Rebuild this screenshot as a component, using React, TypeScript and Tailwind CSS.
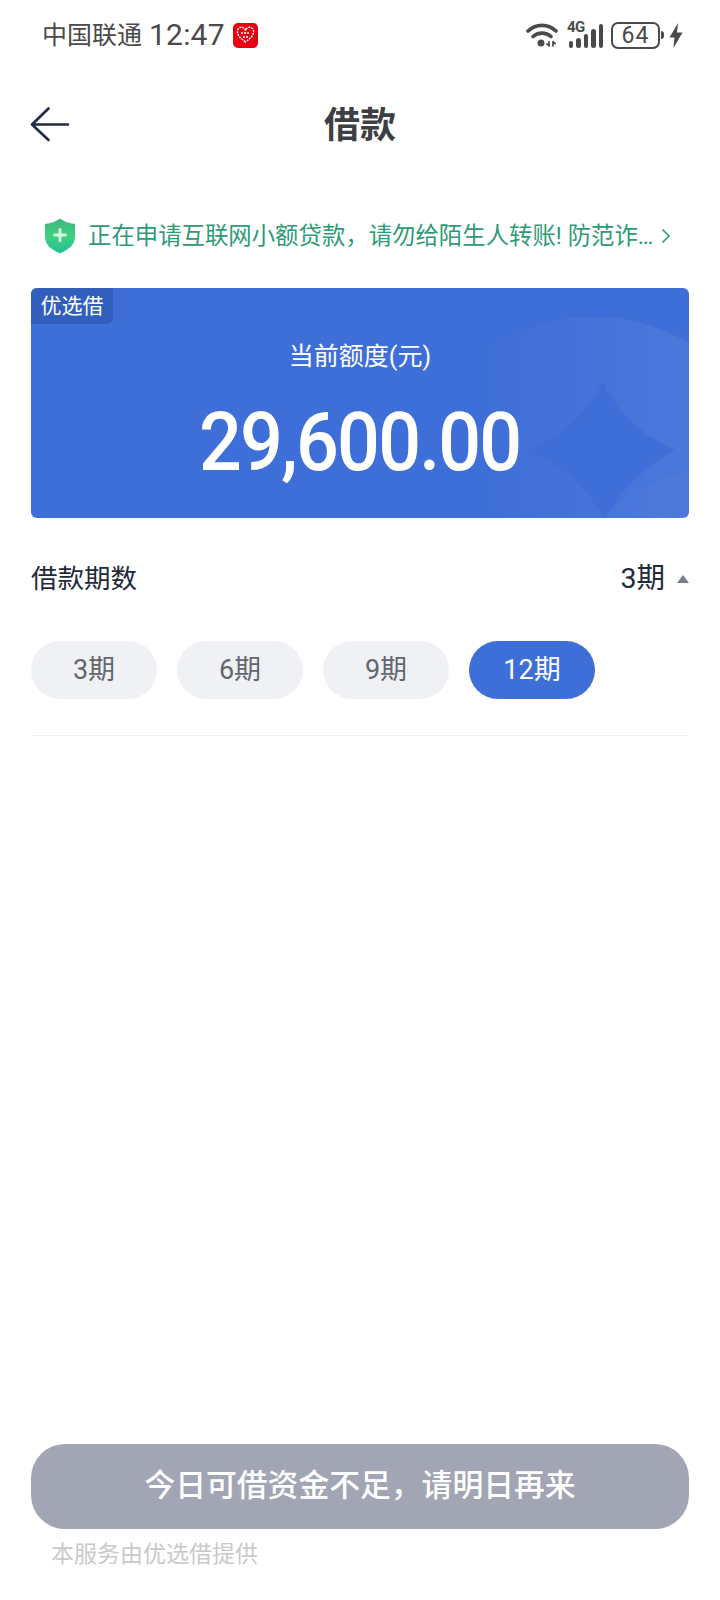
import { ChevronRight } from 'lucide-react';

const font = { cjk: 'font-["Roboto","Noto_Sans_CJK_SC",sans-serif]' };

function WifiIcon() {
  return (
    <svg width="33" height="26" viewBox="0 0 33 26" fill="none" stroke="#4a4a4a" strokeWidth="3.6" strokeLinecap="round">
      <path d="M2 9C10 1.5 22 1.5 30 9" />
      <path d="M7 14.5C12 10 20 10 25 14.5" />
      <circle cx="15" cy="21" r="3.5" fill="#4a4a4a" stroke="none" />
      <path d="M23 19.5v4.5M23 24l-2.2-2.2M27 19.5v4.5M27 19.5l2.2 2.2" strokeWidth="1.7" />
    </svg>
  );
}

function SignalIcon() {
  return (
    <div className="relative w-[36px] h-[26px] flex items-end justify-end gap-[3px]">
      <span className="absolute left-0 top-[-3px] text-[15px] leading-[16px] font-bold tracking-[-0.5px] text-[#4a4a4a]">4G</span>
      <div className="w-[4.5px] h-[7px] rounded-full bg-[#4a4a4a]" />
      <div className="w-[4.5px] h-[10px] rounded-full bg-[#4a4a4a]" />
      <div className="w-[4.5px] h-[14px] rounded-full bg-[#4a4a4a]" />
      <div className="w-[4.5px] h-[19px] rounded-full bg-[#4a4a4a]" />
      <div className="w-[4.5px] h-[24px] rounded-full bg-[#4a4a4a]" />
    </div>
  );
}

function HealthBadge() {
  return (
    <div className="w-[25px] h-[25px] rounded-[5px] bg-[#e60012] flex items-center justify-center">
      <svg width="19" height="18" viewBox="0 0 19 18" fill="none" stroke="#fff" strokeWidth="1.4" strokeDasharray="2 1">
        <path d="M9.5 16C5 12.5 1.5 10 1.5 6A4 4 0 0 1 9.5 4.5 4 4 0 0 1 17.5 6C17.5 10 14 12.5 9.5 16Z" />
        <path d="M5 7h9M7 11h5" />
      </svg>
    </div>
  );
}

function ShieldIcon() {
  return (
    <svg width="32" height="36" viewBox="0 0 32 36">
      <defs>
        <linearGradient id="shield" x1="0" y1="0" x2="0" y2="1">
          <stop offset="0" stopColor="#3fb37f" />
          <stop offset="0.5" stopColor="#3ed27c" />
          <stop offset="1" stopColor="#22c09a" />
        </linearGradient>
      </defs>
      <path d="M16 0.5C20 3.5 25 5.5 31 6V19C31 27 24 32 16 35.5 8 32 1 27 1 19V6C7 5.5 12 3.5 16 0.5Z" fill="url(#shield)" />
      <path d="M16 11.5v11M10.5 17h11" stroke="#d9f7e6" strokeWidth="3" strokeLinecap="round" />
    </svg>
  );
}

export default function App() {
  return (
    <div className={`w-[720px] h-[1600px] bg-white flex flex-col overflow-hidden ${font.cjk}`}>
      {/* Status bar */}
      <div className="h-[70px] pl-[42px] pr-[37px] flex items-center justify-between text-[#4a4a4a]">
        <div className="flex items-center">
          <span className="text-[25px] leading-none">中国联通</span>
          <span className="ml-[7px] text-[30px] leading-none tracking-[0.2px]">12:47</span>
          <div className="ml-[8px]"><HealthBadge /></div>
        </div>
        <div className="flex items-center">
          <WifiIcon />
          <div className="ml-[8px]"><SignalIcon /></div>
          <div className="ml-[8px] w-[49px] h-[27px] rounded-[7px] border-[2.5px] border-[#4a4a4a] flex items-center justify-center text-[23px] leading-none tracking-[1px]">64</div>
          <div className="ml-[1px] w-[3px] h-[8px] rounded-r-sm bg-[#4a4a4a]" />
          <svg className="ml-[5px]" width="14" height="25" viewBox="0 0 14 25" fill="#4a4a4a">
            <path d="M9 0L0.5 14.5H5.5L4.5 25 13.5 9.5H8Z" />
          </svg>
        </div>
      </div>

      {/* Title bar */}
      <div className="relative h-[112px] flex items-center justify-center">
        <svg className="absolute left-[30px] top-[36px]" width="40" height="36" viewBox="0 0 40 36" fill="none" stroke="#1f2a44" strokeWidth="2.6" strokeLinecap="round" strokeLinejoin="round">
          <path d="M38 18.5H2M18.5 2.5L2 18.5L18.5 34" />
        </svg>
        <h1 className="text-[36px] leading-none font-bold text-[#3d3f44]">借款</h1>
      </div>

      {/* Notice */}
      <div className="mt-[34px] pl-[44px] pr-[42px] h-[40px] flex items-center text-[#2f9a76]">
        <ShieldIcon />
        <p className="ml-[12px] pt-[2px] flex-1 min-w-0 whitespace-nowrap text-[23.4px] leading-none">正在申请互联网小额贷款，请勿给陌生人转账! 防范诈…</p>
        <ChevronRight className="w-[24px] h-[28px] shrink-0" strokeWidth={1.7} />
      </div>

      {/* Limit card */}
      <div className="relative mt-[32px] mx-[31px] h-[230px] rounded-[6px] bg-[#3e6fd8] overflow-hidden text-white">
        <svg className="absolute inset-0" width="658" height="230" viewBox="0 0 658 230">
          <defs>
            <linearGradient id="glow" x1="0" y1="0" x2="1" y2="0">
              <stop offset="0.2" stopColor="#fff" stopOpacity="0" />
              <stop offset="1" stopColor="#fff" stopOpacity="0.09" />
            </linearGradient>
          </defs>
          <circle cx="562" cy="219" r="190" fill="url(#glow)" />
          <path d="M572 92Q590 138 644 162Q594 190 574 232Q552 190 499 162Q552 138 572 92Z" fill="#3e6fd8" />
          <path d="M574 230Q610 190 658 185V230Z" fill="#fff" fillOpacity="0.02" />
        </svg>
        <div className="absolute left-0 top-0 w-[82px] h-[36px] rounded-br-[6px] bg-[#325fbb] flex items-center justify-center text-[21px] leading-none">优选借</div>
        <div className="relative flex flex-col items-center pt-[54px]">
          <div className="text-[25px] leading-[30px]">当前额度(元)</div>
          <div className="mt-[20px] text-[82px] leading-[100px] font-medium tracking-[-2px] scale-x-[0.92]">29,600.00</div>
        </div>
      </div>

      {/* Term */}
      <div className="mt-[37px] mx-[31px] h-[48px] flex items-center justify-between">
        <span className="text-[26.5px] leading-none text-[#1f2a3c]">借款期数</span>
        <div className="flex items-center">
          <span className="text-[28.5px] leading-none text-[#1f2a3c]">3期</span>
          <div className="ml-[12px] w-0 h-0 border-x-[6px] border-x-transparent border-b-[8px] border-b-[#7b7f88]" />
        </div>
      </div>
      <div className="mt-[38px] mx-[31px] flex gap-[20px]">
        {['3期', '6期', '9期', '12期'].map((term) => (
          <div
            key={term}
            className={
              term === '12期'
                ? 'w-[126px] h-[58px] rounded-full bg-[#3e6fd8] text-white flex items-center justify-center text-[27px] leading-none'
                : 'w-[126px] h-[58px] rounded-full bg-[#f0f1f5] text-[#63666d] flex items-center justify-center text-[27px] leading-none'
            }
          >
            {term}
          </div>
        ))}
      </div>
      <div className="mt-[36px] mx-[31px] h-px bg-[#eeeff2]" />

      <div className="flex-1" />

      {/* Bottom */}
      <div className="mx-[31px] h-[85px] rounded-[34px] bg-[#a1a5b4] flex items-center justify-center text-white text-[30.8px] leading-none font-medium">
        今日可借资金不足，请明日再来
      </div>
      <div className="mt-[12px] mb-[31px] ml-[51px] text-[23px] leading-[28px] text-[#c9c9cc]">本服务由优选借提供</div>
    </div>
  );
}
